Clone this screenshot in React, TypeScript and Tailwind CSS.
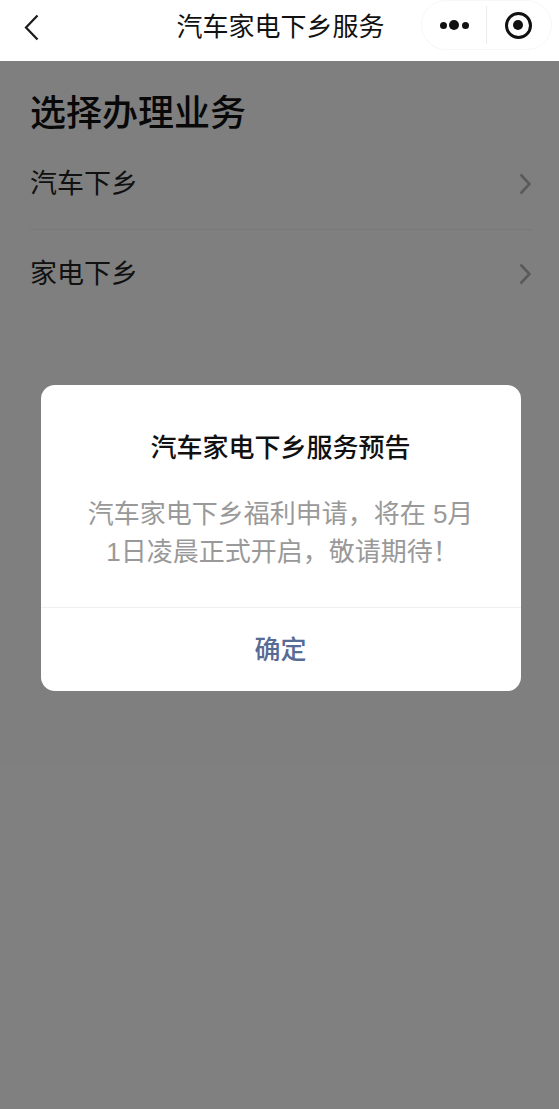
import React from 'react';

const FONT = "font-['Liberation_Sans','Noto_Sans_CJK_SC',sans-serif]";

const Chevron = () => (
  <svg width="12" height="24" viewBox="0 0 12 24" fill="none" className="shrink-0 mr-[1px]">
    <path d="M1.5 2.5 10.5 12 1.5 21.5" stroke="#b4b4b4" strokeWidth="2.6" />
  </svg>
);

const rows = [
  { label: '汽车下乡', cls: 'h-[92px] pt-[1px] border-b border-[#f2f2f2]' },
  { label: '家电下乡', cls: 'h-[86px] pt-[2px]' },
];

export default function App() {
  return (
    <div className={`relative w-[559px] h-[1109px] overflow-hidden bg-white ${FONT}`}>
      <header className="relative z-20 h-[61px] bg-white flex items-center">
        <svg width="18" height="30" viewBox="0 0 18 30" fill="none" className="absolute left-[22px] top-[13px]">
          <path d="M15.5 2.5 4 14.5 15.5 26.5" stroke="#1a1a1a" strokeWidth="2.2" />
        </svg>
        <h1 className="w-[563px] ml-[2px] text-center text-[26px] leading-[52px] mb-[8px] text-[#111]">汽车家电下乡服务</h1>
        <div className="absolute left-[421px] top-0 w-[131px] h-[50px] rounded-full border border-[#f7f7f7] flex items-center">
          <div className="w-[65px] h-[38px] flex items-center justify-center gap-[2.5px] border-r border-[#ececec]">
            <span className="w-[7px] h-[7px] rounded-full bg-[#111]" />
            <span className="w-[10px] h-[10px] rounded-full bg-[#111]" />
            <span className="w-[7px] h-[7px] rounded-full bg-[#111]" />
          </div>
          <div className="flex-1 flex items-center justify-center pr-[2px]">
            <div className="w-[27px] h-[27px] rounded-full border-[3px] border-[#111] flex items-center justify-center">
              <span className="w-[10px] h-[10px] rounded-full bg-[#111]" />
            </div>
          </div>
        </div>
      </header>

      <main className="pl-[30px] pr-[27px] pt-[28px]">
        <h2 className="text-[36px] leading-[50px] font-medium text-[#111]">选择办理业务</h2>
        <ul className="-mt-[1px]">
          {rows.map(r => (
            <li key={r.label} className={`flex items-center justify-between box-border ${r.cls}`}>
              <span className="text-[27px] text-[#222]">{r.label}</span>
              <Chevron />
            </li>
          ))}
        </ul>
      </main>

      <div className="absolute inset-0 z-10 bg-black/50 flex justify-center pt-[385px] pl-[2px]">
        <div className="w-[480px] h-[306px] bg-white rounded-[14px] flex flex-col">
          <div className="h-[223px] border-b border-[#f0f0f0] flex flex-col items-center px-[44px] pt-[45px]">
            <h3 className="text-[26px] leading-[36px] font-medium text-[#111]">汽车家电下乡服务预告</h3>
            <p className="mt-[29px] text-[26px] leading-[38px] text-[#999] text-center">
              汽车家电下乡福利申请，将在 5月
              <br />
              <span className="inline-block ml-[4px]">1日凌晨正式开启，敬请期待！</span>
            </p>
          </div>
          <button className="flex-1 pt-[2px] text-[26px] font-medium text-[#576b95]">确定</button>
        </div>
      </div>
    </div>
  );
}
